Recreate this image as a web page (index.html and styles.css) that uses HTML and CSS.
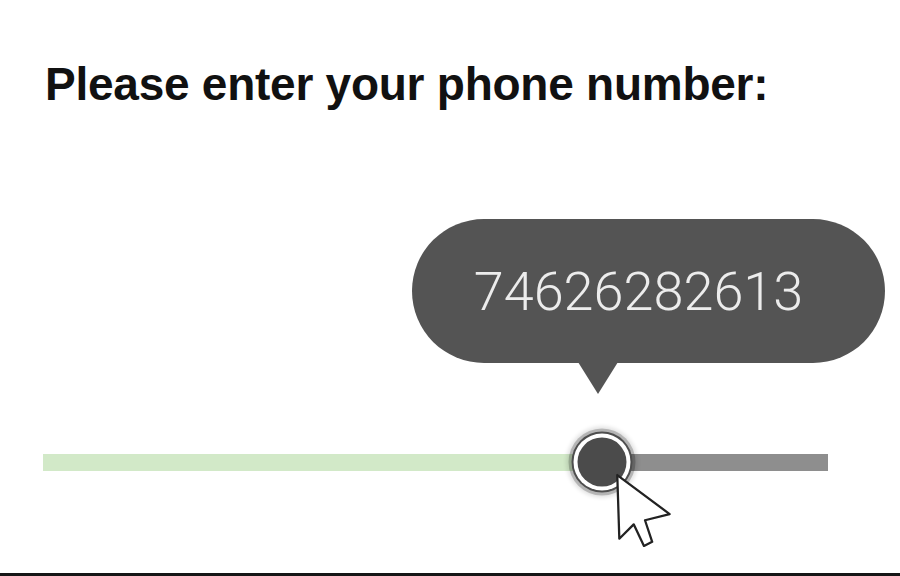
FILE: index.html
```html
<!DOCTYPE html>
<html lang="en">
<head>
  <meta charset="UTF-8" />
  <meta name="viewport" content="width=device-width, initial-scale=1" />
  <title>Phone number</title>
  <link rel="stylesheet" href="styles.css">
</head>
<body>
  <div class="screen">
    <h1 class="prompt">Please enter your phone number:</h1>

    <div class="slider" role="slider" aria-valuenow="74626282613">
      <div class="track-fill" style="width: 559px"></div>
      <div class="track-rest"></div>

      <div class="tooltip">
        <span class="tooltip-value">74626282613</span>
      </div>

      <div class="thumb" style="left: 559px"></div>

      <!-- mouse pointer resting on the thumb -->
      <svg class="pointer" width="60" height="76" viewBox="-2 -2 58 74">
        <polygon points="0,0 2,62 16,48 26,69 34,65 27,44 51,38"
                 fill="#fff" stroke="#222" stroke-width="2.2" stroke-linejoin="round" />
      </svg>
    </div>
  </div>
</body>
</html>
```

FILE: styles.css
```css
body, html {
  margin: 0;
  padding: 0;
  background-color: #fff;
  font-family: 'Liberation Sans', Arial, sans-serif;
}

.screen {
  height: 573px;
  border-bottom: 3px solid #161616;
  overflow: hidden;
}

.prompt {
  margin: 61px 0 0 45px;
  font-size: 46px;
  line-height: 46px;
  font-weight: bold;
  letter-spacing: -0.25px;
  color: #111;
}

.slider {
  position: relative;
  display: flex;
  width: 785px;
  height: 17px;
  margin: 347px 0 0 43px;
}

.track-fill {
  background-color: #d2e9c8;
}

.track-rest {
  flex: 1;
  background-color: #8e8e8e;
}

.thumb {
  position: absolute;
  top: 8px;
  width: 49px;
  height: 49px;
  border-radius: 50%;
  background-color: #4b4b4b;
  transform: translate(-50%, -50%);
  box-shadow:
    0 0 0 4px #fff,
    0 0 0 6px #4e4e4e,
    0 0 0 9px rgba(0, 0, 0, 0.2),
    0 0 4px 11px rgba(0, 0, 0, 0.12);
}

.tooltip {
  position: absolute;
  left: 369px;
  top: -235px;
  width: 473px;
  height: 144px;
  border-radius: 72px;
  background-color: #545454;
  display: flex;
  align-items: center;
  justify-content: center;
  padding-right: 20px;
  box-sizing: border-box;
}

.tooltip::after {
  content: '';
  position: absolute;
  left: 166px;
  top: 143px;
  border-left: 20px solid transparent;
  border-right: 20px solid transparent;
  border-top: 32px solid #545454;
}

.tooltip-value {
  font-family: Roboto, 'Open Sans', sans-serif;
  font-weight: 300;
  font-size: 54px;
  color: #ececec;
}

.pointer {
  position: absolute;
  left: 572px;
  top: 19px;
}
```
